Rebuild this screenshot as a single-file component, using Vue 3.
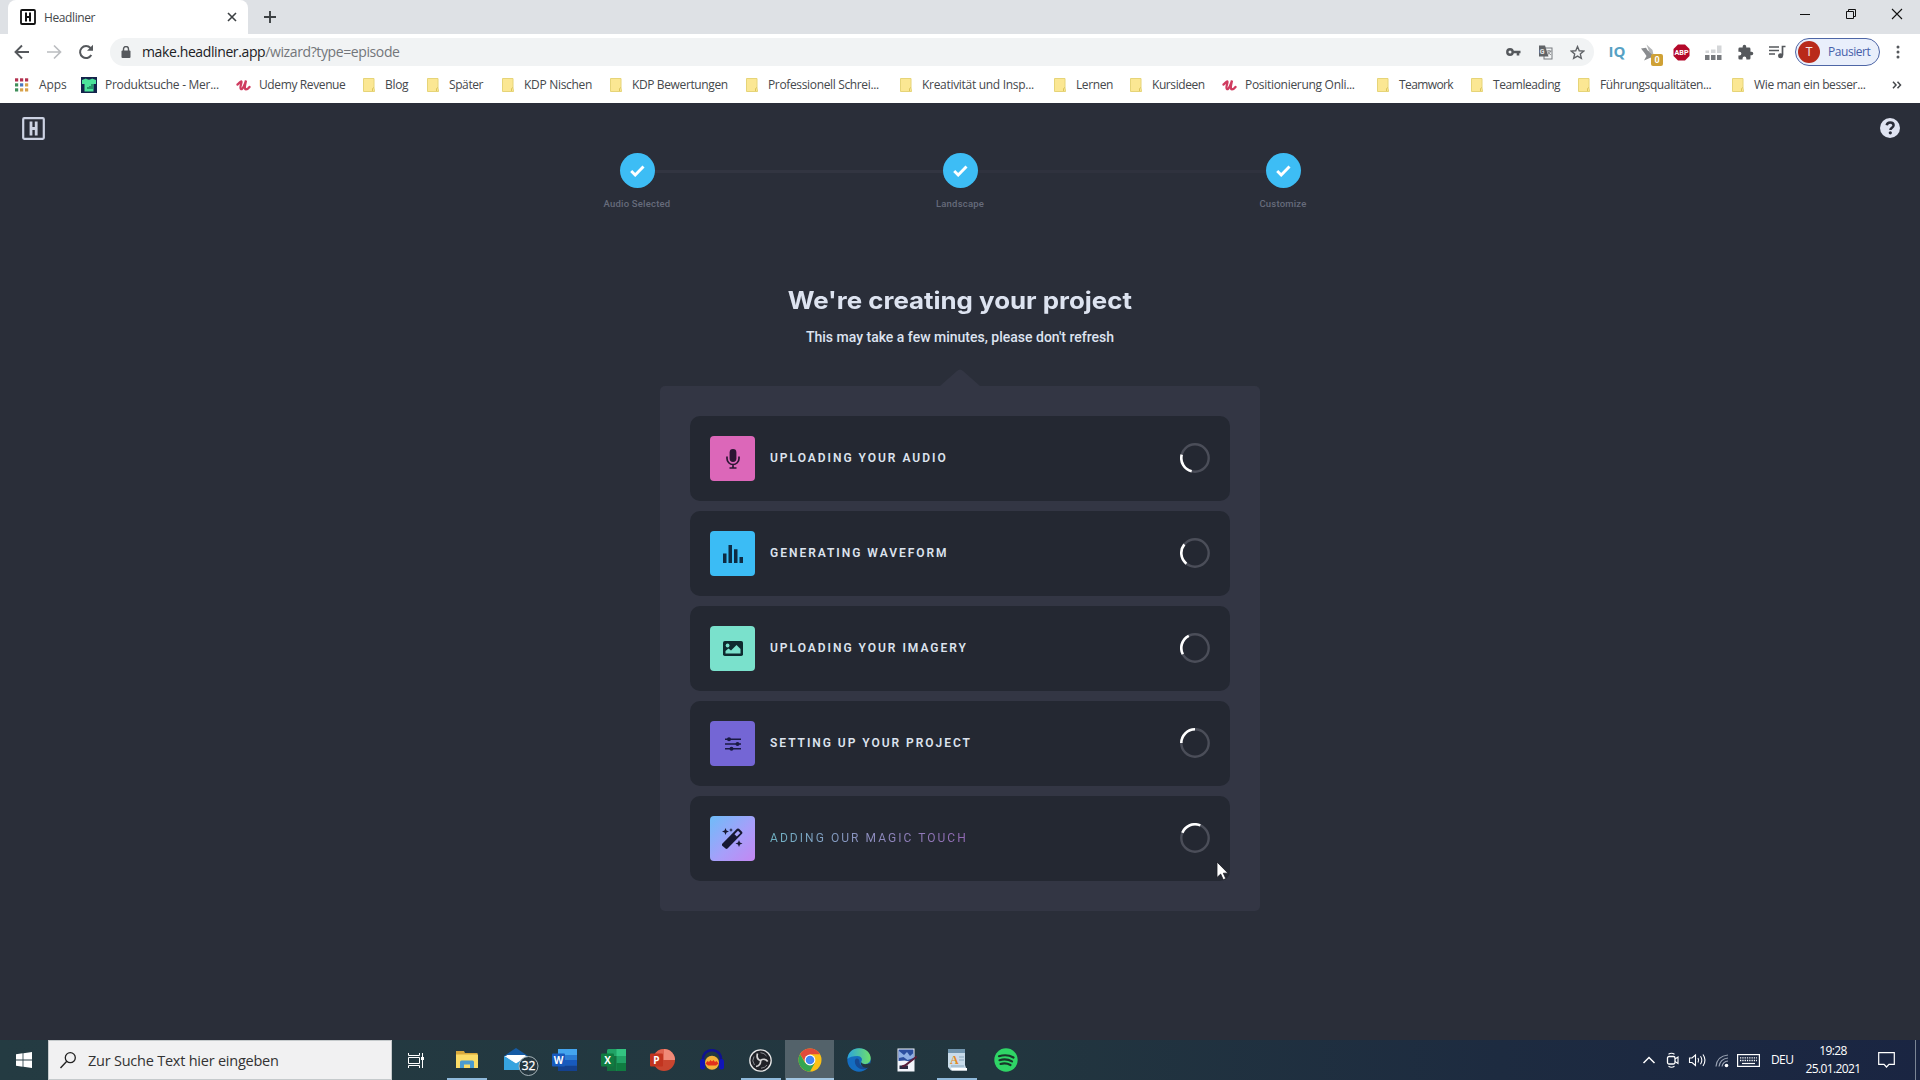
<script setup>
const bookmarks = [
  { label: 'Apps', kind: 'apps', w: 67, ls: -0.05 },
  { label: 'Produktsuche - Mer...', kind: 'shirt', w: 155, ls: -0.27 },
  { label: 'Udemy Revenue', kind: 'udemy', w: 127, ls: -0.38 },
  { label: 'Blog', kind: 'folder', w: 64, ls: -0.3 },
  { label: 'Später', kind: 'folder', w: 75, ls: -0.4 },
  { label: 'KDP Nischen', kind: 'folder', w: 108, ls: -0.3 },
  { label: 'KDP Bewertungen', kind: 'folder', w: 136, ls: -0.38 },
  { label: 'Professionell Schrei...', kind: 'folder', w: 154, ls: -0.35 },
  { label: 'Kreativität und Insp...', kind: 'folder', w: 154, ls: -0.3 },
  { label: 'Lernen', kind: 'folder', w: 76, ls: -0.4 },
  { label: 'Kursideen', kind: 'folder', w: 92, ls: -0.42 },
  { label: 'Positionierung Onli...', kind: 'udemy', w: 155, ls: -0.3 },
  { label: 'Teamwork', kind: 'folder', w: 94, ls: -0.6 },
  { label: 'Teamleading', kind: 'folder', w: 107, ls: -0.42 },
  { label: 'Führungsqualitäten...', kind: 'folder', w: 154, ls: -0.36 },
  { label: 'Wie man ein besser...', kind: 'folder', w: 150, ls: -0.36 },
]

const appDots = ['#b3314f', '#b3314f', '#b3314f', '#3f8f5a', '#4a78c0', '#d8a24a', '#3f8f5a', '#d8a24a', '#d8a24a']

const steps = ['Audio Selected', 'Landscape', 'Customize']

const tasks = [
  { label: 'Uploading your audio', icon: 'mic', angle: 194, ls: 1.98 },
  { label: 'Generating waveform', icon: 'wave', angle: 219, ls: 1.98 },
  { label: 'Uploading your imagery', icon: 'image', angle: 243, ls: 1.98 },
  { label: 'Setting up your project', icon: 'sliders', angle: 270, ls: 1.96 },
  { label: 'Adding our magic touch', icon: 'magic', angle: 293, ls: 2.05 },
]

const apps = [
  { id: 'explorer', open: true },
  { id: 'mail' },
  { id: 'word' },
  { id: 'excel' },
  { id: 'ppt' },
  { id: 'audacity' },
  { id: 'obs', open: true },
  { id: 'chrome', open: true, active: true },
  { id: 'edge' },
  { id: 'paint' },
  { id: 'wordpad', open: true },
  { id: 'spotify' },
]
</script>

<template>
  <div class="screen">
    <header class="tabs">
      <div class="tab">
        <svg class="favicon" width="16" height="16" viewBox="0 0 16 16">
          <rect x="1" y="1" width="14" height="14" rx="1" fill="#fff" stroke="#111" stroke-width="1.8" />
          <path d="M6 3.5v9M10 3.5v9M6 8h4" stroke="#111" stroke-width="2" fill="none" />
        </svg>
        <span class="tab-title">Headliner</span>
        <svg width="10" height="10" viewBox="0 0 10 10"><path d="M1 1l8 8M9 1L1 9" stroke="#3c4043" stroke-width="1.6" /></svg>
      </div>
      <svg class="plus" width="12" height="12" viewBox="0 0 12 12"><path d="M6 0v12M0 6h12" stroke="#3c4043" stroke-width="1.9" /></svg>
      <div class="window-buttons">
        <svg width="46" height="28" viewBox="0 0 46 28"><path d="M18 14.5h10" stroke="#111" /></svg>
        <svg width="46" height="28" viewBox="0 0 46 28"><path d="M18.500 11.500h7v7h-7zM20.500 11v-1.500h7v7H26" stroke="#111" fill="none" /></svg>
        <svg width="46" height="28" viewBox="0 0 46 28"><path d="M18 9l10 10M28 9L18 19" stroke="#111" stroke-width="1.100" /></svg>
      </div>
    </header>

    <div class="toolbar">
      <span class="slot"><svg width="16" height="16" viewBox="0 0 16 16"><path d="M15 8H2M8 1.500L1.500 8 8 14.500" stroke="#55585c" stroke-width="1.900" fill="none" /></svg></span>
      <span class="slot"><svg width="16" height="16" viewBox="0 0 16 16"><path d="M1 8h13M8 1.500L14.500 8 8 14.500" stroke="#bbbdc0" stroke-width="1.700" fill="none" /></svg></span>
      <span class="slot"><svg width="16" height="16" viewBox="0 0 16 16"><path d="M13.300 11A6 6 0 1 1 12.500 4L14 5.500" stroke="#55585c" stroke-width="2" fill="none" /><path d="M15 .8v6H9z" fill="#55585c" /></svg></span>
      <div class="omnibox">
        <svg width="10" height="13" viewBox="0 0 10 13"><rect x="0.500" y="4.500" width="9" height="7.500" rx="1" fill="#55585c" /><path d="M2.500 5V3a2.500 2.500 0 0 1 5 0v2" stroke="#55585c" stroke-width="1.400" fill="none" /></svg>
        <span class="url">make.headliner.app<i>/wizard?type=episode</i></span>
        <span class="slot"><svg width="15" height="10" viewBox="0 0 15 10"><circle cx="4" cy="5" r="2.700" stroke="#55585c" stroke-width="2.400" fill="none" /><path d="M7 5h7.500M12 5v3.500" stroke="#55585c" stroke-width="2.600" fill="none" /></svg></span>
        <span class="slot">
          <svg width="15" height="15" viewBox="0 0 15 15"><rect x="6" y="3" width="8" height="11" fill="#f1f3f4" stroke="#777a7e" /><path d="M1 .5h6l3.500 11H1z" fill="#606367" /><text x="1.800" y="8.500" font-size="7" font-weight="700" fill="#e4e6e8" font-family="Roboto, sans-serif">G</text><path d="M8.500 6h5M11 5v1M12.500 6c-.5 2-2 3-3 3.500M10 7c.7 1.500 2 2.300 3 2.800" stroke="#777a7e" stroke-width=".9" fill="none" /></svg>
        </span>
        <span class="slot last"><svg width="15" height="15" viewBox="0 0 24 24"><path d="M12 2.500l2.800 6.700 7.200.6-5.500 4.700 1.700 7L12 17.800l-6.200 3.700 1.700-7L2 9.800l7.200-.6z" stroke="#606367" stroke-width="2.200" fill="none" /></svg></span>
      </div>
      <div class="extensions">
        <span class="slot"><b class="iq">IQ</b></span>
        <span class="slot bird">
          <svg width="16" height="17" viewBox="0 0 16 17"><path d="M0 4.500l5-.8 1.500 2.500L11.500 10 10 13.500 3 16.500l2.500-4.500L3.500 9z" fill="#8a8c8f" /><path d="M5.500.5l6 5.500 1 5-4-2.500z" fill="#b4b6b8" /></svg>
          <em>0</em>
        </span>
        <span class="slot"><svg width="17" height="17" viewBox="0 0 17 17"><path d="M5 .5h7L16.500 5v7L12 16.500H5L.5 12V5z" fill="#b4092a" /><text x="8.500" y="11.300" text-anchor="middle" textLength="14" lengthAdjust="spacingAndGlyphs" font-size="7.800" font-weight="700" fill="#fff" font-family="Roboto, sans-serif">ABP</text></svg></span>
        <span class="slot"><svg width="17" height="15" viewBox="0 0 17 15"><path d="M0 10h4.500v5H0zM6 10h4.500v5H6zM12 10h4.500v5H12z" fill="#76797d" /><path d="M.5 5.500H4V8H.500zM6 4.500h4.500V8H6zM12 .5h4.500V8H12z" fill="#d4d6d8" /></svg></span>
        <span class="slot"><svg width="17" height="17" viewBox="0 0 24 24"><path d="M20.500 11H19V7a2 2 0 0 0-2-2h-4V3.500a2.500 2.500 0 0 0-5 0V5H4a2 2 0 0 0-2 2v3.800h1.500a2.700 2.700 0 0 1 0 5.400H2V20a2 2 0 0 0 2 2h3.800v-1.500a2.700 2.700 0 0 1 5.400 0V22H17a2 2 0 0 0 2-2v-4h1.500a2.500 2.500 0 0 0 0-5z" fill="#55585c" /></svg></span>
        <span class="slot"><svg width="17" height="14" viewBox="0 0 17 14"><path d="M0 2h10M0 5.500h10M0 9h6M16.500 1.500H13.500v9" stroke="#55585c" stroke-width="1.700" fill="none" /><circle cx="11.500" cy="10.800" r="2.500" fill="#55585c" /></svg></span>
      </div>
      <div class="profile"><span class="avatar">T</span><span class="paused">Pausiert</span></div>
      <span class="slot dots"><svg width="4" height="14" viewBox="0 0 4 14"><circle cx="2" cy="2" r="1.500" fill="#55585c" /><circle cx="2" cy="7" r="1.500" fill="#55585c" /><circle cx="2" cy="12" r="1.500" fill="#55585c" /></svg></span>
    </div>

    <nav class="bookmarks">
      <div v-for="b in bookmarks" :key="b.label" class="bookmark" :class="b.kind" :style="{ width: b.w + 'px' }">
        <svg v-if="b.kind === 'apps'" width="15" height="14" viewBox="0 0 15 14">
          <rect v-for="(c, i) in appDots" :key="i" :x="(i % 3) * 5 + 1" :y="Math.floor(i / 3) * 5 + 0.3" width="3.200" height="3.200" :fill="c" />
        </svg>
        <svg v-else-if="b.kind === 'shirt'" width="16" height="16" viewBox="0 0 16 16">
          <rect width="16" height="16" fill="#14234b" /><path d="M1 3l4-1.500c1 1.500 5 1.500 6 0L15 3v4h-2.500v7.500h-9V7H1z" fill="#4ce39a" /><path d="M7 12v-2M9 12V9M11 12V7" stroke="#14704f" stroke-width="1.300" />
        </svg>
        <svg v-else-if="b.kind === 'udemy'" width="15" height="14" viewBox="0 0 15 14">
          <path d="M1.500 6.500c1.500-1 2.800-3 3.700-3 1.200 0-2 6.500-.3 7.500C6.500 12 9 6 10 2.500 9 7 8 11 10 11.300c1.500 0 2.500-1 3.500-2.300" stroke="#cf3b5f" stroke-width="2.300" fill="none" stroke-linecap="round" />
        </svg>
        <svg v-else width="12" height="14" viewBox="0 0 12 14"><path d="M.5.5h10.500v9.500l.6 3.500H.5z" fill="#fbe793" stroke="#e6d478" /><path d="M9.500 13V10.500l1.500-1" stroke="#dcc65e" fill="none" /></svg>
        <span :style="{ letterSpacing: b.ls + 'px' }">{{ b.label }}</span>
      </div>
      <svg class="more" width="10" height="8" viewBox="0 0 10 8"><path d="M1 .8L4 4 1 7.200M5.500.8l3 3.200-3 3.200" stroke="#45484c" stroke-width="1.500" fill="none" /></svg>
    </nav>

    <main class="page">
      <div class="page-bar">
        <svg width="23" height="23" viewBox="0 0 23 23"><rect x="1.200" y="1.200" width="20.600" height="20.600" rx="1" fill="none" stroke="#ccd2e3" stroke-width="2.200" /><path d="M9 4.500v14M14.200 4.500v14M9 11.500h5" stroke="#ccd2e3" stroke-width="2.800" fill="none" /></svg>
        <svg width="20" height="20" viewBox="0 0 20 20"><circle cx="10" cy="10" r="10" fill="#dfe3f1" /><path d="M6.700 7.300C7 5.300 8.500 4.400 10.200 4.400c2 0 3.400 1.200 3.400 2.900 0 2.400-3.200 2.400-3.200 4.700" stroke="#2a2d39" stroke-width="2.500" fill="none" /><circle cx="10.300" cy="14.800" r="1.600" fill="#2a2d39" /></svg>
      </div>

      <div class="stepper">
        <div v-for="s in steps" :key="s" class="step">
          <span class="step-dot"><svg width="15" height="12" viewBox="0 0 15 12"><path d="M1.200 6l4 4L13.500 1.500" stroke="#fff" stroke-width="2.900" fill="none" /></svg></span>
          <span class="step-label">{{ s }}</span>
        </div>
      </div>

      <h1><span>We're creating your project</span></h1>
      <p class="hint">This may take a few minutes, please don't refresh</p>

      <svg class="pointer" width="40" height="17" viewBox="0 0 40 17"><path d="M0 17L17 2q3-3 6 0l17 15z" fill="#333644" /></svg>
      <section class="panel">
        <div v-for="t in tasks" :key="t.icon" class="task">
          <span class="tile" :class="t.icon">
            <svg v-if="t.icon === 'mic'" width="14" height="20" viewBox="0 0 14 20"><rect x="3.600" y="0" width="6.800" height="13" rx="3.400" fill="#2c1533" /><path d="M1 7.500v2a6 6 0 0 0 12 0v-2M7 15.500V19M3.500 19h7" stroke="#2c1533" stroke-width="1.700" fill="none" /></svg>
            <svg v-else-if="t.icon === 'wave'" width="20" height="18" viewBox="0 0 20 18"><path d="M0 8.500h3.500V18H0zM5.500 0H9v18H5.500zM11 4.300h3.500V18H11zM16.500 12H20v6h-3.500z" fill="#0d2b43" /></svg>
            <svg v-else-if="t.icon === 'image'" width="20" height="15" viewBox="0 0 20 15"><rect width="20" height="15" rx="1.800" fill="#0e2a2f" /><circle cx="4.600" cy="4.500" r="1.900" fill="#7ae1cc" /><path d="M2.500 12.500V10l3-2.500 2.500 2L13.500 4l4 4v4.500z" fill="#7ae1cc" /></svg>
            <svg v-else-if="t.icon === 'sliders'" width="16" height="14" viewBox="0 0 16 14"><path d="M0 2.300h16M0 7h16M0 11.700h16" stroke="#191941" stroke-width="1.600" /><circle cx="4" cy="2.300" r="2" fill="#191941" /><circle cx="12.500" cy="7" r="2" fill="#191941" /><circle cx="6.500" cy="11.700" r="2" fill="#191941" /></svg>
            <svg v-else width="21" height="21" viewBox="0 0 21 21"><path d="M0 16L15 .8q1-.8 2 0l3 3q.8 1 0 2L5.500 20.500q-1 .8-2 0L0 17.500z" fill="#171832" /><path d="M12.500 6.200L16 2.800l2.300 2.200-3.500 3.500z" fill="#a7a2fb" /><path d="M3.500 0l1 2.500L7 3.500l-2.500 1-1 2.500-1-2.500-2.500-1 2.500-1zM17 12l1 2.500 2.500 1-2.500 1-1 2.500-1-2.500-2.500-1 2.500-1zM9 0l.6 1.500 1.400.5-1.400.6L9 4l-.6-1.400L7 2l1.400-.5z" fill="#171832" /></svg>
          </span>
          <span class="task-label" :class="t.icon" :style="{ letterSpacing: t.ls + 'px' }">{{ t.label }}</span>
          <svg class="spinner" width="30" height="30" viewBox="0 0 30 30">
            <circle cx="15" cy="15" r="13.700" fill="none" stroke="#4b4e59" stroke-width="2.400" />
            <circle cx="15" cy="15" r="13.700" fill="none" stroke="#fff" stroke-width="2.600" pathLength="360" stroke-dasharray="90 270" :transform="`rotate(${t.angle - 90} 15 15)`" />
          </svg>
        </div>
      </section>
    </main>

    <footer class="taskbar">
      <div class="start"><svg width="16" height="16" viewBox="0 0 16 16"><path d="M0 2.200L6.600 1.300v6.300H0zM7.400 1.200L16 0v7.600H7.400zM0 8.400h6.600v6.300L0 13.800zM7.400 8.400H16V16l-8.600-1.200z" fill="#fff" /></svg></div>
      <div class="search">
        <svg width="16" height="17" viewBox="0 0 16 17"><circle cx="10.300" cy="5.700" r="5" fill="none" stroke="#222" stroke-width="1.300" /><path d="M6.800 9.300L.5 16" stroke="#222" stroke-width="1.400" /></svg>
        <span>Zur Suche Text hier eingeben</span>
      </div>
      <div class="taskview"><svg width="17" height="15" viewBox="0 0 17 15"><path d="M.5 0v2.500h11V0M.5 15v-2.500h11V15M.5 4.500h11v6H.5zM14.500 0v15" fill="none" stroke="#fff" /><rect x="13" y="4" width="3" height="3" fill="#fff" /></svg></div>

      <div v-for="a in apps" :key="a.id" class="app" :class="[a.id, { open: a.open, active: a.active }]">
        <svg v-if="a.id === 'explorer'" width="22" height="20" viewBox="0 0 22 20"><path d="M0 1h8l1 2h12.500v15H0z" fill="#d9a93c" /><path d="M0 4.500h22V18H0z" fill="#fbdc67" /><path d="M4 18v-6q0-1.500 1.500-1.500h11Q18 10.500 18 12v6h-4v-3.500H8V18z" fill="#4b9bd0" /></svg>
        <svg v-else-if="a.id === 'mail'" class="mail-icon" width="36" height="28" viewBox="0 0 36 28"><path d="M0 8L12 0l12 8v14H0z" fill="#155ba4" /><path d="M0 8h24L12 16z" fill="#f5fafd" /><path d="M0 8l12 7.500L24 8v14H0z" fill="#36a3df" /><path d="M2 7h20l-10 8z" fill="#fff" /><circle cx="24.500" cy="18" r="9.500" fill="#24363f" stroke="#a7b5ba" /><text x="24.500" y="22.300" text-anchor="middle" font-size="12" fill="#fff" stroke="#fff" stroke-width=".3" font-family="Open Sans, sans-serif">32</text></svg>
        <svg v-else-if="a.id === 'word' || a.id === 'excel'" width="25" height="22" viewBox="0 0 25 22">
          <template v-if="a.id === 'word'"><rect x="6" width="19" height="22" rx="1.500" fill="#2b7cd3" /><path d="M6 0h19v6H6z" fill="#44a5ee" /><path d="M6 11h19v5.500H6z" fill="#185abd" /><path d="M6 16.500h19V22H6z" fill="#14418f" /><rect y="4.500" width="13" height="13" rx="1" fill="#185abd" /></template>
          <template v-else><rect x="6" width="19" height="22" rx="1.500" fill="#21a366" /><path d="M15.500 0H25v7h-9.500z" fill="#33c481" /><path d="M6 7h9.500v15H6z" fill="#14703f" /><path d="M15.500 14H25v8h-9.500z" fill="#107c41" /><rect y="4.500" width="13" height="13" rx="1" fill="#107c41" /></template>
          <text x="6.500" y="14.800" text-anchor="middle" font-size="10" font-weight="700" fill="#fff" font-family="Open Sans, sans-serif">{{ a.id === 'word' ? 'W' : 'X' }}</text>
        </svg>
        <svg v-else-if="a.id === 'ppt'" width="25" height="22" viewBox="0 0 25 22"><circle cx="14" cy="11" r="11" fill="#c9452f" /><path d="M14 0a11 11 0 0 1 11 11H14z" fill="#f08a78" /><path d="M14 0a11 11 0 0 0-11 11h11z" fill="#e06450" /><rect y="4.500" width="13" height="13" rx="1" fill="#c2341f" /><text x="6.500" y="14.800" text-anchor="middle" font-size="10" font-weight="700" fill="#fff" font-family="Open Sans, sans-serif">P</text></svg>
        <svg v-else-if="a.id === 'audacity'" width="24" height="22" viewBox="0 0 24 22"><circle cx="12" cy="13.700" r="7" fill="#f3b23a" /><path d="M5.500 14.500L7.500 12l1.500 1 1.500-2 1.500 1.500 1.500-1.500 1.500 2 1.500-1 2 2.500-2.500 2h-8z" fill="#e1301d" /><path d="M3.500 14C1.500 6 6 1.200 12 1.200S22.500 6 20.500 14" stroke="#10128f" stroke-width="2.500" fill="none" /><rect x="0" y="10" width="5" height="10.500" rx="2.500" fill="#1115b8" /><rect x="19" y="10" width="5" height="10.500" rx="2.500" fill="#1115b8" /></svg>
        <svg v-else-if="a.id === 'obs'" width="23" height="23" viewBox="0 0 23 23"><circle cx="11.500" cy="11.500" r="10.700" fill="#202227" stroke="#e8e8e8" stroke-width="1.300" /><path d="M8.500 4.500C7.500 8 8.500 10.500 11.500 11.500c2.500-2 5.500-1.500 7.200 1M11.500 11.500c.5 3-1.300 5.700-4.500 6" stroke="#d4d4d4" stroke-width="1.700" fill="none" /><path d="M5 7.500a7.500 7.500 0 0 0 .500 8.500M17.500 7a7.500 7.500 0 0 0-6-3.300M12 19.200a7.500 7.500 0 0 0 6-3.200" stroke="#85878c" stroke-width="1" fill="none" /></svg>
        <svg v-else-if="a.id === 'chrome'" width="24" height="24" viewBox="0 0 24 24"><circle cx="12" cy="12" r="11.500" fill="#fbc116" /><path d="M2.040 6.250A11.500 11.500 0 0 1 21.960 6.250H12L7.500 14.500z" fill="#e04a3a" /><path d="M2.040 6.250A11.500 11.500 0 0 0 12 23.500l4.800-8.500-4.800 2-4.800-2z" fill="#34a552" /><circle cx="12" cy="12" r="5.400" fill="#fff" /><circle cx="12" cy="12" r="4.300" fill="#4285f4" /></svg>
        <svg v-else-if="a.id === 'edge'" width="24" height="24" viewBox="0 0 24 24">
          <defs><linearGradient id="edgeTop" x1="0" x2="1"><stop offset="0" stop-color="#2ba4dc" /><stop offset="1" stop-color="#6fe06b" /></linearGradient></defs>
          <circle cx="12" cy="12" r="11.700" fill="#146cc0" /><path d="M.5 11C1 4 6 .3 12 .3c7 0 11.700 5 11.700 9.700 0 4-3 6-6 6-2.500 0-4-1.200-3.500-2.200 2-2.500 0-5.800-3.700-5.800C6 8 2 9 .5 11z" fill="url(#edgeTop)" /><path d="M8 12c-1 5 3 9 8 9.200 3 0 5-1.200 6-2.500-3 1.300-10 .3-9.500-5.500C12 10 9 9.500 8 12z" fill="#164a93" /><path d="M14 13.800c0 2.500 6 3.200 8.500 1.200L24 19l-3 .8c-4 .8-8-1.800-7-6z" fill="#24363f" />
        </svg>
        <svg v-else-if="a.id === 'paint'" width="20" height="24" viewBox="0 0 20 24"><rect x=".5" y=".5" width="17" height="23" fill="#f2f5fb" /><path d="M1.500 1.500h15V12l-4 1.500-5-1-6 .5z" fill="#2c4f9f" /><path d="M2 3l5 4 3-3 3 4 3.500-3v5l-6 2-4-3-4.500 1z" fill="#8fb0e4" /><path d="M2.500 17.500h8.500V21H2.500z" fill="#292a41" /><path d="M19.800 8.500L8 17.500l-3 1" stroke="#5a1f3a" stroke-width="2" fill="none" /></svg>
        <svg v-else-if="a.id === 'wordpad'" width="20" height="23" viewBox="0 0 20 23"><path d="M1 1h17v15l2 5.500H4L1 18z" fill="#c9dcea" /><path d="M1 0h17v4H1z" fill="#7295ae" /><text x="3" y="14.500" font-size="12" font-weight="700" fill="#e38c26" font-family="Liberation Serif, serif">A</text><path d="M12 8h5M12 11h5M4 17h13" stroke="#8ba9be" /><path d="M4 19h16v2.500H5z" fill="#fff" /></svg>
        <svg v-else width="24" height="24" viewBox="0 0 24 24"><circle cx="12" cy="12" r="11.700" fill="#2fd566" /><path d="M5 8.200c5-1.500 10.500-1 14.500 1.300M5.500 12.200c4.500-1.300 9-.8 12.500 1.200M6.500 16c3.500-1 7.200-.6 10 1" stroke="#19352a" stroke-width="2.200" stroke-linecap="round" fill="none" /></svg>
      </div>

      <div class="tray">
        <svg width="24" height="16" viewBox="0 0 24 16"><path d="M6.500 11L12 5.500l5.500 5.500" stroke="#fff" stroke-width="1.500" fill="none" /></svg>
        <svg width="24" height="16" viewBox="0 0 24 16"><rect x="6.500" y="4.500" width="7.500" height="7.500" rx="1.500" fill="none" stroke="#fff" stroke-width="1.300" /><path d="M14 7l3-2v6.500l-3-2M7.500 2.300q3-2 6 0M7.500 14.200q3 2 6 0" stroke="#fff" stroke-width="1.100" fill="none" /></svg>
        <svg width="25" height="16" viewBox="0 0 25 16"><path d="M4.500 6v4.500H7l3.500 3V3L7 6z" fill="none" stroke="#fff" stroke-width="1.100" /><path d="M13 6q1.300 2.300 0 4.500M15.500 4.200q2.700 4 0 8M18 2.500q4 5.700 0 11.500" fill="none" stroke="#fff" stroke-width="1.100" /></svg>
        <svg width="25" height="16" viewBox="0 0 25 16"><g fill="none" stroke="#9aa3b3" stroke-width="1.200"><path d="M6 14.500Q7 4 18 3M9 14.500Q10 7 18 6M12 14.500q1-5 6-5.500" /></g><circle cx="16.500" cy="13.500" r="1.800" fill="#fff" /></svg>
        <svg class="keyboard" width="23" height="13" viewBox="0 0 23 13"><rect x=".6" y=".6" width="21.800" height="11.800" fill="none" stroke="#fff" stroke-width="1.200" /><path d="M3 3.800h17M3 6.500h17" stroke="#fff" stroke-width="1.300" stroke-dasharray="1.300 1" /><path d="M5 9.500h13" stroke="#fff" stroke-width="1.200" /></svg>
        <span class="lang">DEU</span>
        <div class="clock"><span>19:28</span><span>25.01.2021</span></div>
        <svg class="notice" width="17" height="16" viewBox="0 0 17 16"><path d="M.7.7h15.600v11.600h-5.300L8.500 15 6 12.300H.7z" fill="none" stroke="#fff" stroke-width="1.200" /></svg>
        <i class="peek"></i>
      </div>
    </footer>

    <svg class="cursor" width="14" height="20" viewBox="0 0 14 20"><path d="M1 1v15.500l3.700-3.400 2.600 5.700 2.500-1.200-2.500-5.400H12z" fill="#fff" stroke="#1b1c24" stroke-width=".8" /></svg>
  </div>
</template>

<style>
body { overflow: hidden; }
</style>

<style scoped>
.screen { position: relative; display: flex; flex-direction: column; width: 1920px; height: 1080px; overflow: hidden; font-family: "Open Sans", "Noto Sans", sans-serif; background: #2a2e39; }
svg { display: block; flex: none; }
span { white-space: nowrap; }
.tabs { display: flex; height: 34px; padding-left: 8px; background: #dee1e5; flex: none; }
.tab { box-sizing: border-box; display: flex; align-items: center; width: 240px; height: 34px; padding: 0 11px 0 12px; background: #fff; border-radius: 8px 8px 0 0; }
.tab-title { flex: 1; margin-left: 8px; font-size: 12px; letter-spacing: -0.4px; color: #45484c; }
.plus { margin: 11px 0 0 16px; }
.window-buttons { display: flex; margin-left: auto; }
.toolbar { display: flex; align-items: center; height: 36px; padding-left: 6px; background: #fff; flex: none; }
.slot { display: flex; width: 32px; justify-content: center; align-items: center; flex: none; }
.omnibox { display: flex; align-items: center; box-sizing: border-box; width: 1484px; height: 28px; margin-left: 8px; padding: 0 1px 0 11px; border-radius: 14px; background: #f1f3f4; }
.url { flex: 1; margin: -1px 0 0 11px; font-size: 14px; letter-spacing: -0.39px; color: #202124; }
.url i { font-style: normal; color: #73767a; }
.extensions { display: flex; align-items: center; margin-left: 7px; }
.iq { margin-top: -2px; font: 700 15px "Open Sans", sans-serif; color: #56a1c4; }
.bird { position: relative; height: 28px; }
.bird em { position: absolute; left: 18px; top: 16px; width: 12px; height: 12px; border-radius: 2px; background: #cfa135; color: #fff; font: 700 9px/12px Roboto, sans-serif; text-align: center; }
.profile { display: flex; align-items: center; box-sizing: border-box; width: 85px; height: 28px; margin-left: 2px; padding-left: 2px; border: 1px solid #4e66a6; border-radius: 14px; background: #e9effb; }
.avatar { width: 22px; height: 22px; border-radius: 50%; background: #b92a1a; color: #f6e5e2; font: 12px/22px Roboto, sans-serif; text-align: center; }
.paused { margin: -1px 0 0 8px; font-size: 12px; letter-spacing: -0.45px; color: #4660aa; }
.dots { margin-left: 2px; }
.bookmarks { display: flex; align-items: center; box-sizing: border-box; height: 33px; padding: 0 0 4px 14px; background: #fff; flex: none; font-size: 12px; color: #45484c; }
.bookmark { display: flex; align-items: center; flex: none; height: 28px; }
.bookmark span { margin-left: 10px; }
.bookmark.shirt span, .bookmark.udemy span { margin-left: 8px; }
.more { margin-left: 10px; }
.page { display: flex; flex-direction: column; align-items: center; height: 937px; background: #2a2e39; flex: none; }
.page-bar { display: flex; justify-content: space-between; align-items: center; box-sizing: border-box; width: 100%; height: 50px; padding: 0 20px 0 22px; }
.stepper { display: flex; justify-content: space-between; width: 681px; height: 60px; background: linear-gradient(90deg, #323541 0, #323541 50%, #2f323e 50%) 50% 17px / 646px 3px no-repeat; }
.step { display: flex; flex-direction: column; align-items: center; width: 35px; }
.step-dot { display: flex; align-items: center; justify-content: center; width: 35px; height: 35px; border-radius: 50%; background: #3dbdf5; }
.step-label { margin-top: 10px; font: 500 9.500px/12px Roboto, sans-serif; color: #666b7b; letter-spacing: 0.2px; }
h1 { margin: 72px 0 0; height: 32px; font: 700 24px/32px Inter, sans-serif; color: #dde3f0; }
h1 span { display: block; transform: scaleX(1.077); }
.hint { margin: 9px 0 0; font: 500 14px/22px Roboto, sans-serif; color: #dde3f0; }
.pointer { margin-top: 21px; }
.panel { display: flex; flex-direction: column; gap: 10px; box-sizing: border-box; width: 600px; height: 525px; padding: 30px; border-radius: 5px; background: #333644; }
.task { display: flex; align-items: center; box-sizing: border-box; height: 85px; padding: 0 20px; border-radius: 10px; background: #242832; }
.tile { display: flex; align-items: center; justify-content: center; width: 45px; height: 45px; border-radius: 4px; }
.tile.mic { background: #dc67b9; }
.tile.wave { background: #3bbcf5; }
.tile.image { background: #7ae1cc; }
.tile.sliders { background: #7466d5; }
.tile.magic { background: linear-gradient(135deg, #6ebcf8, #a69ffa 55%, #c487f2); }
.task-label { margin: -2px 0 0 15px; font: 600 12px/16px Roboto, sans-serif; text-transform: uppercase; color: #dde3ee; }
.task-label.magic { font-weight: 400; color: transparent; background: linear-gradient(90deg, #6fb3c4, #8f8fc0 50%, #9268b4); background-clip: text; }
.spinner { margin: -1px 0 0 auto; }
.taskbar { display: flex; align-items: center; height: 40px; background: linear-gradient(90deg, #243b42 0, #22363f 1000px, #1d2b40 1500px, #1a2542); flex: none; }
.start { width: 32px; padding-left: 16px; }
.search { display: flex; align-items: center; box-sizing: border-box; width: 344px; height: 40px; padding-left: 11px; border: 1px solid #c5cacc; background: #f1f1f2; }
.search span { margin-left: 12px; font-size: 14.500px; letter-spacing: -0.23px; color: #333; }
.taskview { display: flex; justify-content: center; box-sizing: border-box; width: 50px; padding-right: 2px; }
.app { display: flex; align-items: center; justify-content: center; box-sizing: border-box; width: 49px; height: 40px; }
.app.paint { padding-right: 2px; }
.mail-icon { margin: 3px -4px 0 8px; }
.app.open { background: linear-gradient(#8fb9da, #8fb9da) 50% 100% / 40px 2px no-repeat; }
.app.active { background: linear-gradient(#a2c6e2, #a2c6e2) 50% 100% / 48px 2px no-repeat, #53626a; }
.tray { display: flex; align-items: center; margin-left: auto; color: #fff; font-size: 12px; }
.keyboard { margin-left: 2px; }
.lang { width: 22px; margin: -1px 0 0 11px; letter-spacing: -0.6px; }
.clock { display: flex; flex-direction: column; align-items: center; width: 54px; height: 36px; margin-left: 13px; line-height: 18px; letter-spacing: -0.62px; }
.notice { margin-left: 18px; }
.peek { width: 1px; height: 40px; margin: 0 4px 0 20px; background: #7b8595; }
.cursor { position: absolute; left: 1216px; top: 861px; }
</style>
